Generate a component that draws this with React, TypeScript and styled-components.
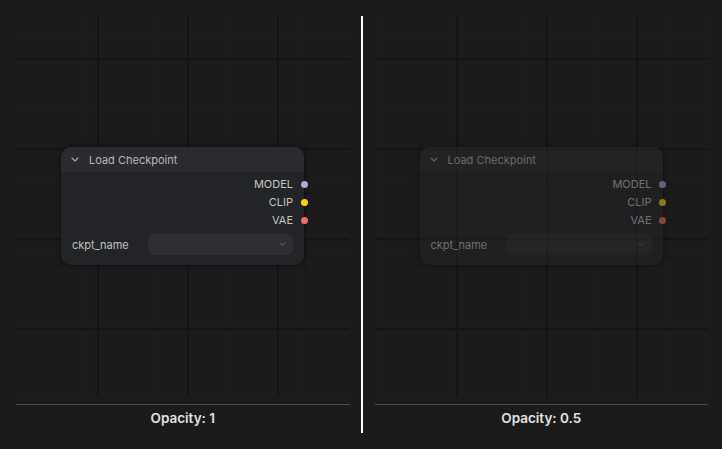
import React from "react";
import styled, { createGlobalStyle } from "styled-components";

const Global = createGlobalStyle`
  html, body { margin: 0; padding: 0; background: #1b1b1b; }
  body { font-family: Inter, "Noto Sans", "Liberation Sans", sans-serif; }
  * { box-sizing: border-box; }
`;

const Page = styled.div`
  width: 722px;
  height: 449px;
  display: flex;
  align-items: flex-start;
  padding: 16px 14px 0 16px;
  background: #1b1b1b;
`;

const Panel = styled.section`
  flex: 1;
  display: flex;
  flex-direction: column;
`;

const Separator = styled.div`
  width: 2px;
  height: 417px;
  margin: 0 12px 0 11px;
  background: #ffffff;
  flex: none;
`;

const Canvas = styled.div`
  position: relative;
  height: 380px;
  background-color: #1c1c1c;
  background-image:
    linear-gradient(to right, #141414 2px, transparent 2px),
    linear-gradient(to bottom, #141414 2px, transparent 2px),
    linear-gradient(to right, #181818 1px, transparent 1px),
    linear-gradient(to bottom, #181818 1px, transparent 1px);
  background-size: 90px 90px, 90px 90px, 9px 9px, 9px 9px;
  background-position: 81px 42px, 81px 42px, 0px 6px, 0px 6px;
`;

const Caption = styled.div`
  margin-top: 8px;
  border-top: 1px solid #4c4c4c;
  padding-top: 5px;
  font-size: 13.5px;
  line-height: 16px;
  font-weight: 600;
  color: #e2e2e2;
  text-align: center;
`;

const Node = styled.div<{ $opacity: number }>`
  position: absolute;
  left: 45px;
  top: 131px;
  width: 243px;
  border-radius: 10px;
  background: #232427;
  box-shadow: 0 0 6px rgba(0, 0, 0, 0.55);
  opacity: ${(p) => p.$opacity};
  display: flex;
  flex-direction: column;
`;

const Header = styled.div`
  height: 25px;
  display: flex;
  align-items: center;
  gap: 10px;
  padding: 0 0 0 10px;
  background: #2a2b2e;
  border-radius: 10px 10px 0 0;
  font-size: 11px;
  color: #b8b8b8;
`;

const Body = styled.div`
  display: flex;
  flex-direction: column;
  padding: 3px 0 10px 0;
`;

const OutputRow = styled.div`
  position: relative;
  height: 18px;
  display: flex;
  align-items: center;
  justify-content: flex-end;
  padding-right: 11px;
  font-size: 11px;
  color: #c6c6c6;
`;

const Dot = styled.span<{ $color: string }>`
  position: absolute;
  right: -3.5px;
  top: 50%;
  width: 7px;
  height: 7px;
  margin-top: -3.5px;
  border-radius: 50%;
  background: ${(p) => p.$color};
`;

const WidgetRow = styled.div`
  margin-top: 5px;
  display: flex;
  align-items: center;
  padding: 0 11px;
`;

const WidgetLabel = styled.span`
  flex: 0 0 76px;
  font-size: 11px;
  color: #c2c2c2;
`;

const Select = styled.div`
  flex: 1;
  height: 21px;
  border-radius: 6px;
  background: #2e2f33;
  display: flex;
  align-items: center;
  justify-content: flex-end;
  padding-right: 7px;
`;

const Chevron = ({ color, w = 8 }: { color: string; w?: number }) => (
  <svg width={w} height={w / 2 + 1} viewBox="0 0 8 5" fill="none">
    <path d="M1 1l3 3 3-3" stroke={color} strokeWidth="1.1" strokeLinecap="round" strokeLinejoin="round" />
  </svg>
);

const outputs = [
  { name: "MODEL", color: "#b7a4e0" },
  { name: "CLIP", color: "#ffd60a" },
  { name: "VAE", color: "#f56b6b" },
];

const CheckpointNode = ({ opacity }: { opacity: number }) => (
  <Node $opacity={opacity}>
    <Header>
      <Chevron color="#a8a8a8" />
      <span>Load Checkpoint</span>
    </Header>
    <Body>
      {outputs.map((o) => (
        <OutputRow key={o.name}>
          {o.name}
          <Dot $color={o.color} />
        </OutputRow>
      ))}
      <WidgetRow>
        <WidgetLabel>ckpt_name</WidgetLabel>
        <Select>
          <Chevron color="#6a6b70" w={7} />
        </Select>
      </WidgetRow>
    </Body>
  </Node>
);

export default function App() {
  return (
    <>
      <Global />
      <Page>
        <Panel>
          <Canvas>
            <CheckpointNode opacity={1} />
          </Canvas>
          <Caption>Opacity: 1</Caption>
        </Panel>
        <Separator />
        <Panel>
          <Canvas>
            <CheckpointNode opacity={0.5} />
          </Canvas>
          <Caption>Opacity: 0.5</Caption>
        </Panel>
      </Page>
    </>
  );
}
